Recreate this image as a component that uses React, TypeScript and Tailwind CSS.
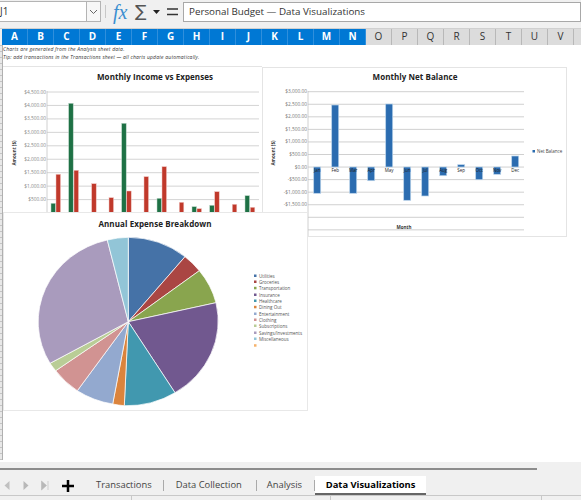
const columns = ['A','B','C','D','E','F','G','H','I','J','K','L','M','N','O','P','Q','R','S','T','U','V',''];
const months = ['Jan','Feb','Mar','Apr','May','Jun','Jul','Aug','Sep','Oct','Nov','Dec'];
const font = { fontFamily: '"Open Sans", sans-serif' };

// [x, top] in page pixels, all bars run down to the pie panel
const greenBars = [[51,203.3],[68.7,103.3],[121.7,123.3],[157,198.3],[192,206.7],[209.7,205.3],[245,195.7]];
const redBars = [[56,174.3],[74,170.3],[91.7,183.7],[109,197.7],[126.7,191],[144,176.7],[162,166.7],[179.3,202.3],[197,208.7],[214.7,191.7],[232.3,204.3],[250.3,207.3]];

// [top, bottom] in page pixels
const netBars = [[167,193.3],[105,167],[167,193.3],[167,180.7],[104,167],[167,200.3],[167,196],[167,175.7],[164.7,167],[167,179.7],[167,174.3],[156,167]];

const piePoints: [number, number][] = [[128.3,237.3],[185,256.7],[199.3,270.7],[216,302.7],[175,392.7],[124.3,405.7],[112.7,404],[77.3,390.7],[55.7,370.7],[50,363.3],[107.3,240],[128.3,237.3]];
const pieColors = ['#4572a7','#aa4643','#89a54e','#71588f','#4198af','#db843d','#93a9cf','#d19392','#b9cd96','#a99bbd','#92c5d7'];
const pieLabels = ['Utilities','Groceries','Transportation','Insurance','Healthcare','Dining Out','Entertainment','Clothing','Subscriptions','Savings/Investments','Miscellaneous',''];
const legendY = [276,282,288.3,295,301,307.3,314,320,326,333,339,345.7];

function App() {
  return (
    <div className="w-[581px] h-[500px] overflow-hidden bg-[#f0f0f0] flex flex-col" style={font}>
      {/* formula bar */}
      <div className="h-[28px] flex items-center pb-[5px] shrink-0 bg-[#f0f0f0]">
        <div className="w-[101px] h-[21px] flex bg-white border-y border-r border-[#b4b4b4]">
          <div className="flex-1 text-[10px] leading-[19px] text-[#333]">J1</div>
          <div className="w-[14px] bg-[#f7f7f7] border-l border-[#b4b4b4] flex items-center justify-center">
            <svg width="9" height="6" viewBox="0 0 9 6"><path d="M1 1l3.5 3.5L8 1" fill="none" stroke="#666" strokeWidth="1" /></svg>
          </div>
        </div>
        <div className="w-px h-[13px] bg-[#c8c8c8] ml-[4px]" />
        <div className="w-[18px] text-[20px] leading-none italic text-[#3b8fd0] ml-[7px]" style={{ fontFamily: '"Liberation Serif", serif' }}>fx</div>
        <div className="w-[14px] text-[17px] leading-none text-[#555] ml-[4px]" style={{ fontFamily: '"DejaVu Sans", sans-serif' }}>∑</div>
        <svg width="7" height="4" viewBox="0 0 7 4" className="ml-[4px]"><path d="M0 0h7L3.500 4z" fill="#222" /></svg>
        <svg width="11" height="8" viewBox="0 0 11 8" className="ml-[7px]"><path d="M0 1h11M0 6.500h11" stroke="#333" strokeWidth="1.500" /></svg>
        <div className="flex-1 h-[20px] ml-[5px] bg-white border border-[#a8a8a8] pl-[5px] text-[9.800px] leading-[18px] text-[#333]">
          Personal Budget — Data Visualizations
        </div>
      </div>

      {/* column headers */}
      <div className="h-[17px] shrink-0 flex pl-[2px] border-t border-[#d0d0d0] overflow-hidden">
        {columns.map((c, i) => (
          <div
            key={i}
            className={i < 14
              ? 'w-[26px] shrink-0 text-center text-[10px] leading-[15px] font-bold text-white bg-[#0078d4] border-r border-[#2f8fdc]'
              : 'w-[26px] shrink-0 text-center text-[10px] leading-[15px] text-[#333] bg-[#dcdcdc] border-r border-[#b8b8b8]'}
          >
            {c}
          </div>
        ))}
      </div>

      {/* sheet */}
      <div className="relative h-[417px] shrink-0 flex bg-white">
        <div className="w-[3px] mb-[2px] bg-[repeating-linear-gradient(to_bottom,#c4c4c4_0,#c4c4c4_1px,#e8e8e8_1px,#e8e8e8_6px)] border-r border-[#b0b0b0]" />
        <div className="flex-1 text-[5px] leading-[8px] italic font-medium text-[#333] tracking-[0.2px]">
          <div>Charts are generated from the Analysis sheet data.</div>
          <div>Tip: add transactions in the Transactions sheet — all charts update automatically.</div>
        </div>

        {/* the charts sit on the sheet canvas, top of sheet is y=45 */}
        <div className="absolute left-[262px] top-[22px] w-[305px] h-[170px] bg-white border border-[#e4e4e4]">
          <svg width="303" height="168" viewBox="263 68 303 168" className="block">
            <text x="415" y="80" textAnchor="middle" fontSize="8" fontWeight="700" fill="#222" letterSpacing="0.05">Monthly Net Balance</text>
            {[3000,2500,2000,1500,1000,500,0,-500,-1000,-1500].map((v, i) => (
              <text key={v} x="307" y={93.200 + i * 12.560} textAnchor="end" fontSize="4.800" fill="#777">
                {(v < 0 ? '-$' : '$') + Math.abs(v).toLocaleString('en-US') + '.00'}
              </text>
            ))}
            {Array.from({ length: 12 }, (_, i) => (
              <line key={i} x1="308" x2="524" y1={91.700 + i * 12.560} y2={91.700 + i * 12.560} stroke="#c4c4c4" strokeWidth="0.800" />
            ))}
            <line x1="308" x2="308" y1="91" y2="237" stroke="#c4c4c4" strokeWidth="0.800" />
            {netBars.map(([top, bottom], i) => (
              <rect key={i} x={313.7 + i * 18} y={top} width="7" height={bottom - top} fill="#2b6cb0" stroke="#b9d3ea" strokeWidth="0.700" />
            ))}
            {months.map((m, i) => (
              <text key={m} x={317.2 + i * 18} y="172" textAnchor="middle" fontSize="4.500" fill="#222">{m}</text>
            ))}
            <text x="404" y="228.500" textAnchor="middle" fontSize="4.500" fontWeight="700" fill="#333">Month</text>
            <text transform="translate(275 153) rotate(-90)" textAnchor="middle" fontSize="4.500" fontWeight="700" fill="#333">Amount ($)</text>
            <rect x="532.500" y="150" width="2.500" height="2.500" fill="#2b6cb0" />
            <text x="537" y="152.500" fontSize="4.500" fill="#444">Net Balance</text>
          </svg>
        </div>

        <div className="absolute left-[3px] top-[21px] w-[259px] h-[147px] bg-white border-t border-[#e4e4e4] overflow-hidden">
          <svg width="259" height="146" viewBox="3 67 259 146" className="block">
            <text x="155" y="80" textAnchor="middle" fontSize="8" fontWeight="700" fill="#222" letterSpacing="0.05">Monthly Income vs Expenses</text>
            {[4500,4000,3500,3000,2500,2000,1500,1000,500].map((v, i) => (
              <text key={v} x="46" y={93.500 + i * 13.450} textAnchor="end" fontSize="4.800" fill="#888">
                {'$' + v.toLocaleString('en-US') + '.00'}
              </text>
            ))}
            {Array.from({ length: 9 }, (_, i) => (
              <line key={i} x1="47" x2="259" y1={92 + i * 13.450} y2={92 + i * 13.450} stroke="#cfcfcf" strokeWidth="0.900" />
            ))}
            <line x1="47" x2="47" y1="91" y2="213" stroke="#c4c4c4" strokeWidth="0.800" />
            {greenBars.map(([x, top], i) => (
              <rect key={i} x={x} y={top} width="4.500" height={213 - top} fill="#1e7145" stroke="#bcd6c8" strokeWidth="0.500" />
            ))}
            {redBars.map(([x, top], i) => (
              <rect key={i} x={x} y={top} width="4.500" height={213 - top} fill="#c0392b" stroke="#f0c4bf" strokeWidth="0.500" />
            ))}
            <text transform="translate(16 153) rotate(-90)" textAnchor="middle" fontSize="4.500" fontWeight="700" fill="#333">Amount ($)</text>
          </svg>
        </div>

        <div className="absolute left-[3px] top-[167px] w-[305px] h-[199px] bg-white border border-[#e8e8e8]">
          <svg width="303" height="197" viewBox="4 213 303 197" className="block">
            <text x="155" y="227" textAnchor="middle" fontSize="8" fontWeight="700" fill="#222" letterSpacing="0.08">Annual Expense Breakdown</text>
            {pieColors.map((color, i) => {
              const [x1, y1] = piePoints[i];
              const [x2, y2] = piePoints[i + 1];
              return (
                <path
                  key={color}
                  d={`M128.3 321.700L${x1} ${y1}A90 84 0 0 1 ${x2} ${y2}Z`}
                  fill={color}
                  stroke="#fff"
                  strokeWidth="0.700"
                />
              );
            })}
            {pieLabels.map((label, i) => (
              <g key={i}>
                <rect x="254" y={legendY[i] - 1.500} width="2.500" height="2.500" fill={i < 11 ? pieColors[i] : '#f6b26b'} />
                <text x="259" y={legendY[i] + 1.500} fontSize="4.500" fill="#555">{label}</text>
              </g>
            ))}
          </svg>
        </div>
      </div>

      {/* sheet tabs */}
      <div className="flex-1 bg-[#f0f0f0] pt-[6px] flex flex-col">
        <div className="w-[537px] h-[2px] bg-[#8c8c8c]" />
        <div className="flex items-center h-[19px] mt-[6px] shrink-0">
          <div className="flex items-center w-[96px] pl-[4px]">
            <svg width="6" height="11" viewBox="0 0 6 11"><path d="M5.500 1v9L.5 5.500z" fill="#c0c0c0" /></svg>
            <svg width="6" height="11" viewBox="0 0 6 11" className="ml-[13px]"><path d="M.5 1v9l5-4.500z" fill="#b8b8b8" /></svg>
            <svg width="8" height="11" viewBox="0 0 8 11" className="ml-[12px]"><path d="M.5 1v9l5-4.500zM7 1v9" fill="#b8b8b8" stroke="#b8b8b8" strokeWidth="0.600" /></svg>
            <svg width="12" height="12" viewBox="0 0 12 12" className="ml-[13px]"><path d="M6 0v12M0 6h12" stroke="#000" strokeWidth="2.500" /></svg>
          </div>
          <div className="flex items-center text-[9.400px] text-[#444] h-full">
            <span>Transactions</span>
            <span className="w-px h-[11px] bg-[#aaa] ml-[11px]" />
            <span className="ml-[12px]">Data Collection</span>
            <span className="w-px h-[11px] bg-[#aaa] ml-[14px]" />
            <span className="ml-[10px]">Analysis</span>
            <span className="w-px h-[11px] bg-[#aaa] ml-[12px]" />
            <span className="w-[111px] h-[19px] text-center font-bold text-black bg-white border-b-[2px] border-[#666] leading-[17px]">
              Data Visualizations
            </span>
          </div>
        </div>
        <div className="flex-1 flex border-t border-[#c8c8c8]">
          <div className="w-[132px] border-r border-[#c8c8c8]" />
          <div className="w-[199px] border-r border-[#c8c8c8]" />
          <div className="w-[211px] border-r border-[#c8c8c8]" />
        </div>
      </div>
    </div>
  );
}

export default App;
